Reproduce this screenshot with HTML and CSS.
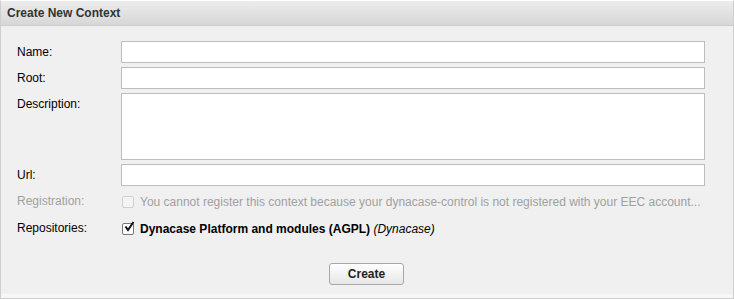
FILE: index.html
```html
<!DOCTYPE html>
<html lang="en">

<head>
    <meta charset="UTF-8">
    <title>Create New Context</title>
    <link rel="stylesheet" href="styles.css">
</head>

<body>
    <div class="panel">
        <div class="panel-header">Create New Context</div>
        <form class="panel-body">
            <div class="form-grid">
                <label class="field-label" for="name">Name:</label>
                <input class="field-input" type="text" id="name">

                <label class="field-label" for="root">Root:</label>
                <input class="field-input" type="text" id="root">

                <label class="field-label" for="desc">Description:</label>
                <textarea class="field-input field-area" id="desc"></textarea>

                <label class="field-label" for="url">Url:</label>
                <input class="field-input" type="text" id="url">

                <span class="field-label disabled">Registration:</span>
                <label class="check-row disabled">
                    <span class="check-box check-off"></span>
                    You cannot register this context because your dynacase-control is not registered with your EEC account...
                </label>

                <span class="field-label">Repositories:</span>
                <label class="check-row">
                    <span class="check-box check-on">
                        <svg width="12" height="12" viewBox="0 0 12 12"><path d="M2.5 5.5 L5 9 L10.5 1" fill="none" stroke="#111" stroke-width="2"/></svg>
                    </span>
                    <b>Dynacase Platform and modules (AGPL)</b>&nbsp;<i>(Dynacase)</i>
                </label>
            </div>
            <div class="actions">
                <button type="button" class="create-btn">Create</button>
            </div>
        </form>
        <div class="panel-footer"></div>
    </div>
</body>

</html>
```

FILE: styles.css
```css
body {
    margin: 0;
    padding: 0;
    background-color: #fff;
    font-family: "Liberation Sans", Arial, sans-serif;
    font-size: 12px;
    color: #000;
}

.panel {
    width: 732px;
    height: 297px;
    border: 1px solid #cfcfcf;
    border-top-color: #fff;
    background-color: #f0f0f0;
    display: flex;
    flex-direction: column;
}

.panel-header {
    height: 24px;
    line-height: 24px;
    padding-left: 6px;
    font-weight: bold;
    color: #333;
    background: linear-gradient(#ececec, #d7d7d7);
    border-bottom: 1px solid #cdcdcd;
}

.panel-body {
    flex: 1;
    margin: 0;
    padding: 15px 28px 0 16px;
}

.form-grid {
    display: grid;
    grid-template-columns: 104px 1fr;
    row-gap: 4px;
}

.field-label {
    line-height: 22px;
}

.field-input {
    box-sizing: border-box;
    height: 22px;
    margin: 0;
    border: 1px solid #bdbdbd;
    background-color: #fff;
    font-family: inherit;
    font-size: 12px;
}

.field-area {
    height: 67px;
    resize: none;
}

.disabled {
    color: #a0a0a0;
}

.check-row {
    display: flex;
    align-items: center;
    line-height: 22px;
    white-space: nowrap;
    padding-top: 1px;
}

.check-box {
    box-sizing: border-box;
    width: 12px;
    height: 12px;
    margin: 0 6px 0 1px;
    border: 1px solid #777;
    border-radius: 2px;
    background-color: #fff;
    display: flex;
}

.check-off {
    border-color: #d0d0d0;
    background-color: #f4f4f4;
}

.check-on svg {
    margin: -3px 0 0 0;
    overflow: visible;
}

.actions {
    display: flex;
    justify-content: center;
    margin-top: 23px;
    padding-left: 11px;
}

.create-btn {
    width: 75px;
    height: 22px;
    border: 1px solid #a8a8a8;
    border-radius: 3px;
    background: linear-gradient(#fff, #e6e6e6);
    font-family: "Liberation Sans", Arial, sans-serif;
    font-size: 12px;
    font-weight: bold;
    color: #222;
}

.panel-footer {
    height: 4px;
    background-color: #f7f7f7;
}
```
